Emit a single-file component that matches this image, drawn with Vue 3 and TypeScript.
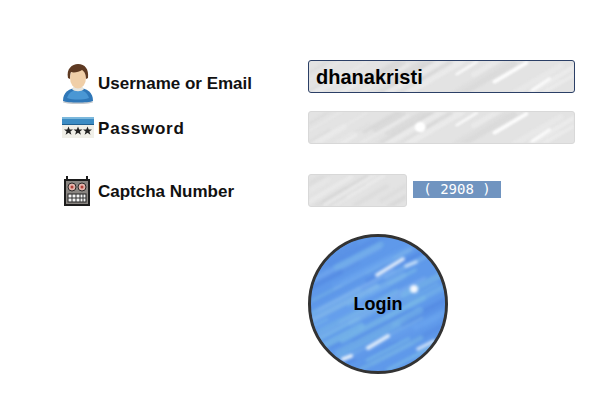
<script setup lang="ts">
import { ref } from 'vue'

type Streak = { x1: number; y1: number; x2: number; y2: number; w: number; c: string; o: number }

const username = ref('dhanakristi')
const password = ref('')
const captcha = ref('')

// small repeatable generator so the brushed texture stays the same between renders
function brushed(count: number, w: number, h: number, slope: number, colors: string[], seed: number): Streak[] {
  let n = seed
  const next = () => {
    n = (n * 9301 + 49297) % 233280
    return n / 233280
  }
  const list: Streak[] = []
  for (let i = 0; i < count; i++) {
    const x = next() * w
    const y = next() * h
    const len = 25 + next() * 60
    list.push({
      x1: x - len / 2,
      y1: y + (len / 2) * slope,
      x2: x + len / 2,
      y2: y - (len / 2) * slope,
      w: 2 + next() * 5,
      c: colors[Math.floor(next() * colors.length)],
      o: 0.35 + next() * 0.4,
    })
  }
  return list
}

const grays = ['#d6d6d6', '#dadada', '#eeeeee', '#d4d4d4', '#ececec']
const blues = ['#5288e2', '#7fb0f0', '#86bcec', '#5a90e4', '#6aa4ee', '#79b8e8']

const wideBase = brushed(26, 267, 33, 0.62, grays, 17)
const shortBase = brushed(12, 99, 33, 0.62, grays, 41)
const buttonBase = brushed(70, 134, 134, 0.52, blues, 73)

const fieldShine: Streak[] = [
  { x1: 149, y1: 14, x2: 169, y2: 1, w: 3, c: '#fbfbfb', o: 0.9 },
  { x1: 187, y1: 22, x2: 219, y2: 2, w: 4, c: '#fcfcfc', o: 1 },
  { x1: 225, y1: 31, x2: 242, y2: 19, w: 3.5, c: '#fafafa', o: 0.95 },
]

const buttonShine: Streak[] = [
  { x1: 66, y1: 38, x2: 92, y2: 22, w: 3.5, c: '#eef5fc', o: 0.95 },
  { x1: 95, y1: 29, x2: 105, y2: 25, w: 3.5, c: '#d0e4fa', o: 0.9 },
  { x1: 57, y1: 111, x2: 77, y2: 99, w: 4, c: '#e4f0fc', o: 0.95 },
  { x1: 107, y1: 112, x2: 123, y2: 104, w: 3.5, c: '#d8e8fa', o: 0.9 },
  { x1: 32, y1: 122, x2: 40, y2: 119, w: 4, c: '#f0f6fc', o: 0.95 },
]

const wideStreaks = [...wideBase, ...fieldShine]
const buttonStreaks = [...buttonBase, ...buttonShine]
</script>

<template>
  <form class="login-form" @submit.prevent>
    <div class="form-row first">
      <label class="field-label">
        <svg class="icon" width="32" height="40" viewBox="0 0 32 40">
          <ellipse cx="16" cy="38" rx="15" ry="2" fill="#c4c8cc" />
          <path d="M1 37c0-9 6-13 15-13s15 4 15 13c-5 2-25 2-30 0z" fill="#2f77b8" />
          <path d="M5 34c2-6 6-8 11-8s9 2 11 8c-6 2-16 2-22 0z" fill="#4a97d4" />
          <path d="M10 25c2 3 10 3 12 0l-2-3h-8z" fill="#e6e6e0" />
          <ellipse cx="16" cy="14" rx="8" ry="10.5" fill="#f0cfa8" />
          <path d="M6 14C4 5 10 0 16 0c7 0 11 5 10 14l-2 1c0-5-2-8-4-9-3 2-8 3-11 2-1 2-1 5-1 7z" fill="#5e3a22" />
        </svg>
        <span>Username or Email</span>
      </label>
      <div class="field wide focused">
        <svg class="texture" viewBox="0 0 267 33" preserveAspectRatio="none">
          <line v-for="(s, i) in wideStreaks" :key="i" :x1="s.x1" :y1="s.y1" :x2="s.x2" :y2="s.y2" :stroke="s.c" :stroke-width="s.w" :opacity="s.o" stroke-linecap="round" />
        </svg>
        <input v-model="username" type="text" />
      </div>
    </div>

    <div class="form-row second">
      <label class="field-label">
        <svg class="icon" width="32" height="21" viewBox="0 0 32 21">
          <rect y="0" width="32" height="21" fill="#f0efe8" />
          <rect y="0" width="32" height="7" fill="#3c8cc4" />
          <rect y="0" width="32" height="2" fill="#7cb8dc" />
          <rect y="7" width="32" height="1" fill="#1f5f8f" />
          <path d="M6.500 9.500l1.200 3h3.300l-2.600 2 1 3.200-2.900-1.900-2.900 1.900 1-3.200-2.600-2h3.300zM16 9.500l1.200 3h3.300l-2.600 2 1 3.200-2.900-1.900-2.900 1.900 1-3.200-2.600-2h3.300zM25.500 9.500l1.200 3H30l-2.600 2 1 3.200-2.900-1.900-2.900 1.900 1-3.200-2.600-2h3.300z" fill="#222" />
        </svg>
        <span>Password</span>
      </label>
      <div class="field wide">
        <svg class="texture" viewBox="0 0 267 33" preserveAspectRatio="none">
          <line v-for="(s, i) in wideStreaks" :key="i" :x1="s.x1" :y1="s.y1" :x2="s.x2" :y2="s.y2" :stroke="s.c" :stroke-width="s.w" :opacity="s.o" stroke-linecap="round" />
          <circle cx="112" cy="16" r="5.500" fill="#ffffff" />
        </svg>
        <input v-model="password" type="password" />
      </div>
    </div>

    <div class="form-row third">
      <label class="field-label">
        <svg class="icon robot" width="26" height="30" viewBox="0 0 26 30">
          <path d="M2 0h2v3h18V0h2v3h2v27H0V3h2z" fill="#1c1c1c" />
          <rect x="2" y="5" width="22" height="23" fill="#8a8682" />
          <circle cx="8" cy="11" r="4" fill="#e4b4ac" stroke="#2a2a2a" />
          <circle cx="18" cy="11" r="4" fill="#e4b4ac" stroke="#2a2a2a" />
          <circle cx="8" cy="11" r="1.500" fill="#b04038" />
          <circle cx="18" cy="11" r="1.500" fill="#b04038" />
          <rect x="4" y="18" width="18" height="8" fill="#f4f4f4" stroke="#222" />
          <path d="M8 18v8M12 18v8M16 18v8M19 18v8M4 22h18" stroke="#333" fill="none" />
        </svg>
        <span>Captcha Number</span>
      </label>
      <div class="field short">
        <svg class="texture" viewBox="0 0 99 33" preserveAspectRatio="none">
          <line v-for="(s, i) in shortBase" :key="i" :x1="s.x1" :y1="s.y1" :x2="s.x2" :y2="s.y2" :stroke="s.c" :stroke-width="s.w" :opacity="s.o" stroke-linecap="round" />
        </svg>
        <input v-model="captcha" type="text" />
      </div>
      <span class="captcha-code">( 2908 )</span>
    </div>

    <div class="form-row submit">
      <button class="login-button" type="submit">
        <svg class="texture soft" viewBox="0 0 134 134">
          <line v-for="(s, i) in buttonStreaks" :key="i" :x1="s.x1" :y1="s.y1" :x2="s.x2" :y2="s.y2" :stroke="s.c" :stroke-width="s.w" :opacity="s.o" stroke-linecap="round" />
          <circle cx="103" cy="52" r="4" fill="#f4f9fe" />
        </svg>
        <span>Login</span>
      </button>
    </div>
  </form>
</template>

<style>
html,
body {
  background: #fff;
}
</style>

<style scoped>
.login-form {
  width: 594px;
  height: 417px;
  box-sizing: border-box;
  padding: 60px 0 0 62px;
  font-family: "Liberation Sans", Arial, sans-serif;
  font-weight: 700;
  font-size: 17px;
  color: #111;
  overflow: hidden;
}

.form-row {
  display: grid;
  grid-template-columns: 246px auto auto;
  justify-content: start;
  align-items: center;
}

.second {
  margin-top: 18px;
}

.third {
  margin-top: 30px;
}

.submit {
  margin-top: 27px;
}

.field-label {
  display: flex;
  align-items: center;
  gap: 4px;
}

.first .field-label {
  align-self: start;
  margin: 4px 0 -11px;
}

.second .field-label span {
  letter-spacing: 0.8px;
  margin-top: 2px;
}

.third .field-label span {
  margin-top: 2px;
}

.icon {
  flex: none;
  display: block;
}

.robot {
  margin: 0 4px 0 2px;
}

.field {
  position: relative;
  height: 33px;
  box-sizing: border-box;
  border: 1px solid #d8d8d8;
  border-radius: 3px;
  background: #e3e3e3;
  overflow: hidden;
}

.field.focused {
  border-color: #2b3f66;
}

.wide {
  width: 267px;
}

.short {
  width: 99px;
}

.texture {
  position: absolute;
  inset: 0;
  width: 100%;
  height: 100%;
  filter: blur(1.2px);
}

.texture.soft {
  filter: blur(1.8px);
}

.field input {
  position: relative;
  width: 100%;
  height: 100%;
  box-sizing: border-box;
  padding: 2px 7px 0;
  border: 0;
  outline: 0;
  background: transparent;
  font: inherit;
  font-size: 20px;
  color: #000;
}

.captcha-code {
  width: 88px;
  height: 17px;
  margin: 0 0 2px 6px;
  background: #7094c0;
  color: #fff;
  font-family: "DejaVu Sans Mono", monospace;
  font-size: 14px;
  font-weight: 400;
  line-height: 17px;
  text-align: center;
  white-space: pre;
}

.submit {
  padding-left: 246px;
  grid-template-columns: auto;
}

.login-button {
  position: relative;
  width: 140px;
  height: 140px;
  padding: 0;
  border: 3px solid #333;
  border-radius: 50%;
  background: #5f99ea;
  overflow: hidden;
  font: inherit;
  font-size: 18px;
  color: #000;
}

.login-button span {
  position: relative;
}
</style>
